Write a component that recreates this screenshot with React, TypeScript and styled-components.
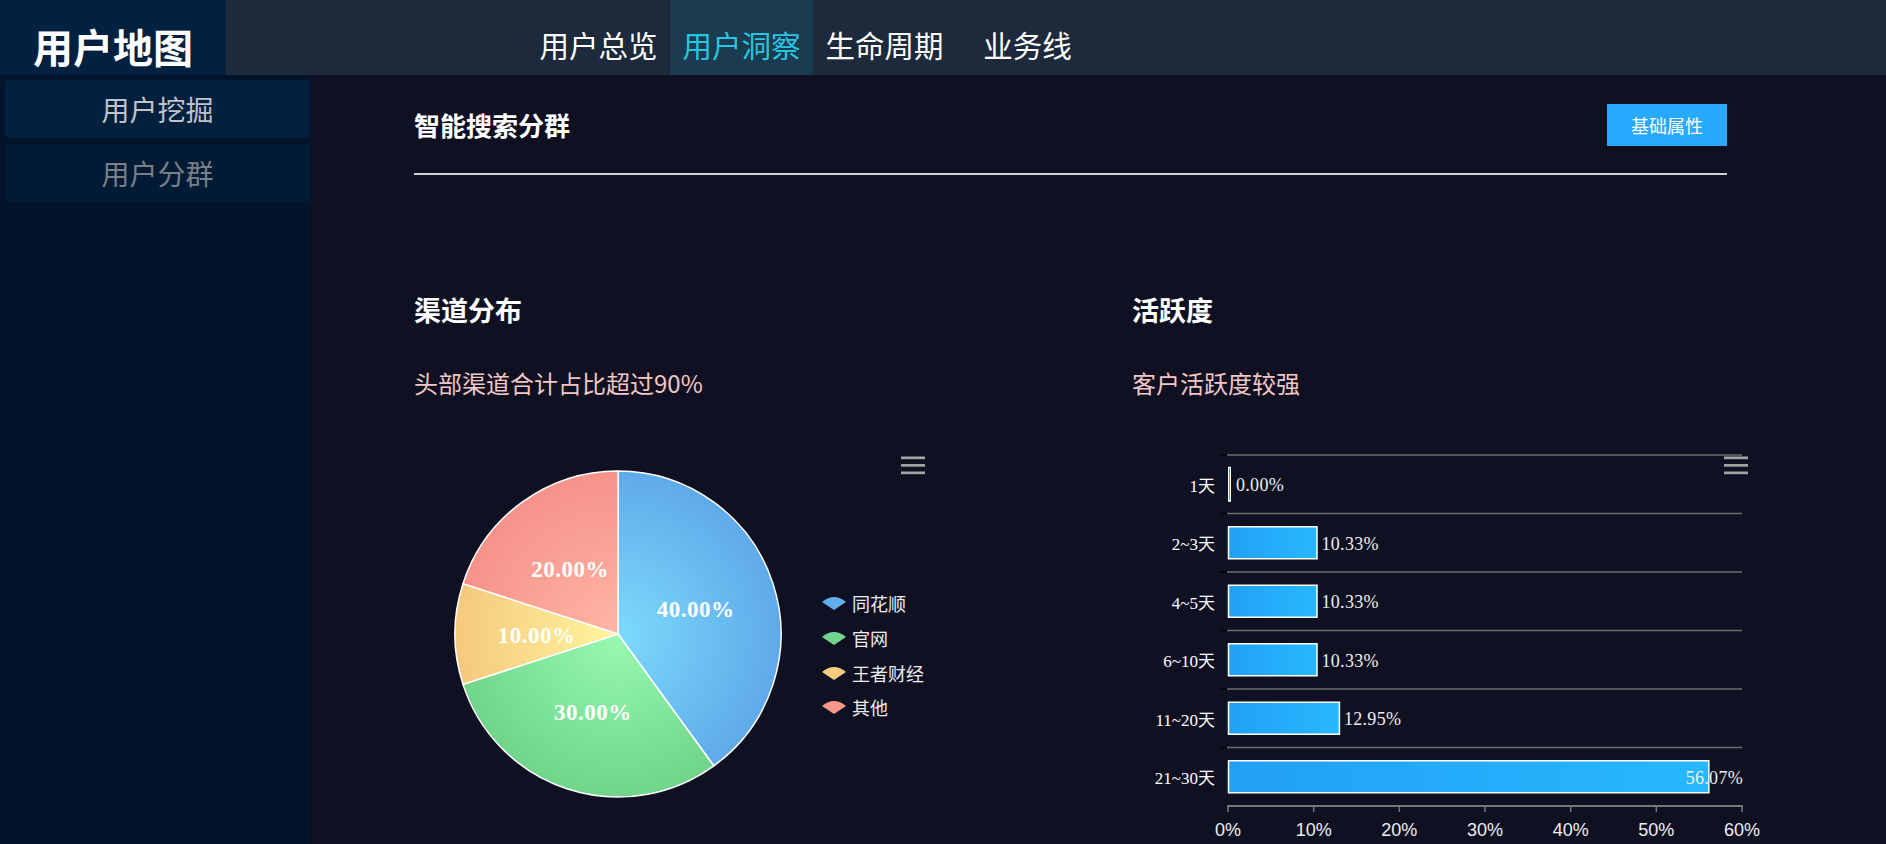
import React from "react";
import styled, { createGlobalStyle } from "styled-components";

const GlobalStyle = createGlobalStyle`
  html, body { margin: 0; padding: 0; background: #0f1123; }
  body { font-family: "Noto Sans CJK SC", "Noto Sans", sans-serif; }
  * { box-sizing: border-box; }
`;

const Page = styled.div`
  min-height: 100vh;
  display: flex;
  flex-direction: column;
  background: #0f1123;
`;

const Header = styled.header`
  height: 75px;
  display: flex;
  background: #1c2a3c;
  flex-shrink: 0;
`;

const Logo = styled.div`
  width: 226px;
  height: 75px;
  padding-top: 16px;
  display: flex;
  align-items: center;
  justify-content: center;
  background: #022040;
  color: #fff;
  font-size: 40px;
  font-weight: 700;
`;

const Nav = styled.nav`
  display: flex;
  margin-left: 301px;
`;

const NavItem = styled.div<{ $active?: boolean }>`
  width: 143px;
  height: 75px;
  padding-top: 12px;
  display: flex;
  align-items: center;
  justify-content: center;
  font-size: 29.5px;
  color: ${(p) => (p.$active ? "#29c4df" : "#ffffff")};
  background: ${(p) => (p.$active ? "#1b3b50" : "transparent")};
`;

const Body = styled.div`
  flex: 1;
  display: flex;
`;

const Sidebar = styled.aside`
  width: 310px;
  flex-shrink: 0;
  background: #011429;
  padding: 5px 0 0 5px;
  display: flex;
  flex-direction: column;
  gap: 6px;
`;

const SideItem = styled.div<{ $active?: boolean }>`
  height: 58px;
  display: flex;
  align-items: center;
  justify-content: center;
  border-radius: 4px 0 0 4px;
  font-size: 28px;
  background: ${(p) => (p.$active ? "#03203f" : "#021b35")};
  color: ${(p) => (p.$active ? "#bfc3ca" : "#787f88")};
`;

const Main = styled.main`
  flex: 1;
  padding: 29px 0 0 104px;
`;

const Content = styled.div`
  width: 1313px;
`;

const TopRow = styled.div`
  display: flex;
  justify-content: space-between;
  align-items: center;
`;

const PageTitle = styled.h1`
  margin: 0;
  font-size: 26px;
  font-weight: 700;
  line-height: 1;
  color: #ffffff;
`;

const AttrButton = styled.button`
  width: 120px;
  height: 42px;
  border: none;
  background: #26a9ff;
  color: #ffffff;
  font-family: inherit;
  font-size: 18px;
  padding: 0;
`;

const Divider = styled.div`
  height: 2px;
  margin-top: 27px;
  background: #cfcfcf;
`;

const Sections = styled.div`
  display: grid;
  grid-template-columns: 718px 640px;
  margin-top: 121px;
`;

const Section = styled.section`
  display: flex;
  flex-direction: column;
`;

const SectionTitle = styled.h2`
  margin: 0;
  font-size: 27px;
  font-weight: 700;
  line-height: 1;
  color: #ffffff;
`;

const SectionNote = styled.p`
  margin: 48px 0 0;
  font-size: 24px;
  line-height: 1;
  color: #f2c7c5;
`;

const ChartBox = styled.div<{ $width: number }>`
  position: relative;
  margin-top: 44px;
  width: ${(p) => p.$width}px;
  display: flex;
  align-items: flex-start;
`;

const MenuIcon = styled.svg<{ $left: number }>`
  position: absolute;
  top: 17px;
  left: ${(p) => p.$left}px;
`;

const Legend = styled.ul`
  list-style: none;
  margin: 147px 0 0;
  padding: 0;
  display: flex;
  flex-direction: column;
`;

const LegendItem = styled.li`
  height: 34.7px;
  display: flex;
  align-items: center;
  gap: 6px;
  font-size: 18px;
  color: #ececec;
`;

const Menu = ({ left }: { left: number }) => (
  <MenuIcon $left={left} width="24" height="19" viewBox="0 0 24 19">
    <rect x="0" y="0.5" width="24" height="2.7" fill="#a3a3a3" />
    <rect x="0" y="8" width="24" height="2.7" fill="#a3a3a3" />
    <rect x="0" y="15.5" width="24" height="2.7" fill="#a3a3a3" />
  </MenuIcon>
);

type Slice = { name: string; value: number; id: string; inner: string; outer: string; legend: string };

const slices: Slice[] = [
  { name: "同花顺", value: 40, id: "gBlue", inner: "#7ddafc", outer: "#5faae9", legend: "#61aeea" },
  { name: "官网", value: 30, id: "gGreen", inner: "#98fab2", outer: "#70d48a", legend: "#74d68e" },
  { name: "王者财经", value: 10, id: "gYellow", inner: "#fff59c", outer: "#f4c97f", legend: "#f6cd80" },
  { name: "其他", value: 20, id: "gRed", inner: "#ffb6a6", outer: "#f6928a", legend: "#f7968b" },
];

const CX = 204;
const CY = 195;
const R = 163;

const pt = (deg: number, r: number) => {
  const a = (deg * Math.PI) / 180;
  return [CX + r * Math.sin(a), CY - r * Math.cos(a)];
};

const PieChart = () => {
  let acc = 0;
  const parts = slices.map((s) => {
    const a0 = (acc / 100) * 360;
    acc += s.value;
    const a1 = (acc / 100) * 360;
    const [x0, y0] = pt(a0, R);
    const [x1, y1] = pt(a1, R);
    const large = a1 - a0 > 180 ? 1 : 0;
    const d = `M${CX} ${CY} L${x0} ${y0} A${R} ${R} 0 ${large} 1 ${x1} ${y1} Z`;
    const [lx, ly] = pt((a0 + a1) / 2, R / 2);
    return { s, d, lx, ly };
  });
  return (
    <svg width="408" height="390" viewBox="0 0 408 390">
      <defs>
        {slices.map((s) => (
          <radialGradient key={s.id} id={s.id} gradientUnits="userSpaceOnUse" cx={CX} cy={CY} r={R}>
            <stop offset="0" stopColor={s.inner} />
            <stop offset="1" stopColor={s.outer} />
          </radialGradient>
        ))}
      </defs>
      {parts.map(({ s, d }) => (
        <path key={s.id} d={d} fill={`url(#${s.id})`} stroke="#ffffff" strokeWidth="1.5" strokeLinejoin="round" />
      ))}
      {parts.map(({ s, lx, ly }) => (
        <text
          key={s.id + "t"}
          x={lx}
          y={ly + 1}
          textAnchor="middle"
          dominantBaseline="central"
          fill="#ffffff"
          fontFamily='"Liberation Serif", serif'
          fontWeight="700"
          fontSize="23"
          letterSpacing="0.5"
        >
          {s.value.toFixed(2)}%
        </text>
      ))}
    </svg>
  );
};

const bars = [
  { label: "1天", value: 0 },
  { label: "2~3天", value: 10.33 },
  { label: "4~5天", value: 10.33 },
  { label: "6~10天", value: 10.33 },
  { label: "11~20天", value: 12.95 },
  { label: "21~30天", value: 56.07 },
];

const X0 = 96;
const X1 = 610;
const TOP = 16;
const BAND = 58.5;
const AXIS_Y = TOP + BAND * 6;
const scale = (v: number) => ((X1 - X0) * v) / 60;

const BarChart = () => (
  <svg width="640" height="404" viewBox="0 0 640 404">
    <defs>
      <linearGradient id="barFill" x1="0" y1="0" x2="1" y2="0">
        <stop offset="0" stopColor="#21a0f4" />
        <stop offset="1" stopColor="#28b8ff" />
      </linearGradient>
    </defs>
    {Array.from({ length: 6 }).map((_, i) => (
      <g key={"g" + i}>
        <line x1={X0 - 1} x2={X1} y1={TOP + BAND * i} y2={TOP + BAND * i} stroke="#6e6e6e" strokeWidth="1.5" />
        <line x1={X0 - 7} x2={X0 - 1} y1={TOP + BAND * i} y2={TOP + BAND * i} stroke="#000000" strokeWidth="1.5" />
      </g>
    ))}
    <line x1={X0 - 1} x2={X1 + 1} y1={AXIS_Y} y2={AXIS_Y} stroke="#777777" strokeWidth="2" />
    {Array.from({ length: 7 }).map((_, k) => {
      const x = X0 + ((X1 - X0) * k) / 6;
      return (
        <g key={"t" + k}>
          <line x1={x} x2={x} y1={AXIS_Y} y2={AXIS_Y + 6} stroke="#777777" strokeWidth="1.5" />
          <text
            x={x}
            y={AXIS_Y + 24}
            textAnchor="middle"
            dominantBaseline="central"
            fill="#eeeeee"
            fontFamily='"Liberation Sans", sans-serif'
            fontSize="18"
          >
            {k * 10}%
          </text>
        </g>
      );
    })}
    {bars.map((b, i) => {
      const cy = TOP + BAND * (i + 0.5);
      const w = scale(b.value);
      const end = X0 + w;
      const txt = `${b.value.toFixed(2)}%`;
      const overflow = end + 5 + 58 > X1 + 2;
      return (
        <g key={b.label}>
          <text
            x={X0 - 13}
            y={cy + 2}
            textAnchor="end"
            dominantBaseline="central"
            fill="#ffffff"
            fontFamily='"Liberation Serif", "Noto Sans CJK SC", serif'
            fontSize="17"
          >
            {b.label}
          </text>
          {b.value === 0 ? (
            <rect x={X0 + 0.5} y={cy - 17} width={2} height={34} fill="#26a9ff" stroke="#ffffff" strokeWidth="1" />
          ) : (
            <rect x={X0 + 0.5} y={cy - 16} width={w} height={32} fill="url(#barFill)" stroke="#ffffff" strokeWidth="1.5" />
          )}
          <text
            x={overflow ? X1 + 1 : b.value === 0 ? X0 + 8 : end + 5}
            y={cy + 1}
            textAnchor={overflow ? "end" : "start"}
            dominantBaseline="central"
            fill="#eeeeee"
            fontFamily='"Liberation Serif", serif'
            fontSize="18"
            letterSpacing="0.3"
          >
            {txt}
          </text>
        </g>
      );
    })}
  </svg>
);

const LegendIcon = ({ color }: { color: string }) => (
  <svg width="24" height="14" viewBox="0 0 24 14">
    <path d="M0 6 Q12 -4 24 6 L12 14 Z" fill={color} />
  </svg>
);

export default function App() {
  return (
    <Page>
      <GlobalStyle />
      <Header>
        <Logo>用户地图</Logo>
        <Nav>
          <NavItem>用户总览</NavItem>
          <NavItem $active>用户洞察</NavItem>
          <NavItem>生命周期</NavItem>
          <NavItem>业务线</NavItem>
        </Nav>
      </Header>
      <Body>
        <Sidebar>
          <SideItem $active>用户挖掘</SideItem>
          <SideItem>用户分群</SideItem>
        </Sidebar>
        <Main>
          <Content>
            <TopRow>
              <PageTitle>智能搜索分群</PageTitle>
              <AttrButton>基础属性</AttrButton>
            </TopRow>
            <Divider />
            <Sections>
              <Section>
                <SectionTitle>渠道分布</SectionTitle>
                <SectionNote>头部渠道合计占比超过90%</SectionNote>
                <ChartBox $width={520}>
                  <PieChart />
                  <Legend>
                    {slices.map((s) => (
                      <LegendItem key={s.id}>
                        <LegendIcon color={s.legend} />
                        {s.name}
                      </LegendItem>
                    ))}
                  </Legend>
                  <Menu left={487} />
                </ChartBox>
              </Section>
              <Section>
                <SectionTitle>活跃度</SectionTitle>
                <SectionNote>客户活跃度较强</SectionNote>
                <ChartBox $width={640}>
                  <BarChart />
                  <Menu left={592} />
                </ChartBox>
              </Section>
            </Sections>
          </Content>
        </Main>
      </Body>
    </Page>
  );
}
